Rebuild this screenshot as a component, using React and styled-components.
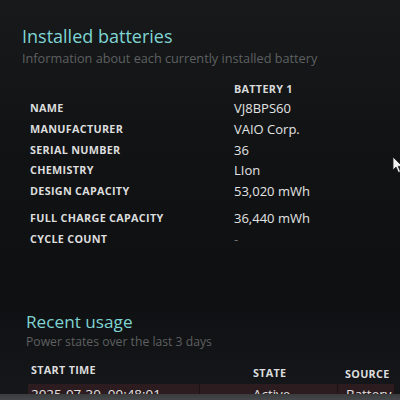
import { styled, createGlobalStyle } from "styled-components";

const GlobalStyle = createGlobalStyle`
    html, body {
        margin: 0;
        padding: 0;
        background: #111214;
    }
    * { box-sizing: border-box; }
`;

const batteryRows = [
    { label: "NAME", value: "VJ8BPS60" },
    { label: "MANUFACTURER", value: "VAIO Corp." },
    { label: "SERIAL NUMBER", value: "36" },
    { label: "CHEMISTRY", value: "LIon" },
    { label: "DESIGN CAPACITY", value: "53,020 mWh" },
    { label: "FULL CHARGE CAPACITY", value: "36,440 mWh", spaced: true },
    { label: "CYCLE COUNT", value: "-", dim: true },
];

function App() {
    return (
        <>
            <GlobalStyle />
            <Screen>
                <Section>
                    <Title>Installed batteries</Title>
                    <Subtitle>Information about each currently installed battery</Subtitle>
                    <InfoTable>
                        <ColHead />
                        <ColHead>BATTERY 1</ColHead>
                        {batteryRows.map(({ label, value, spaced, dim }) => (
                            <Row key={label} $spaced={spaced}>
                                <Label>{label}</Label>
                                <Value $dim={dim}>{value}</Value>
                            </Row>
                        ))}
                    </InfoTable>
                </Section>

                <Section $usage>
                    <Title $small>Recent usage</Title>
                    <Subtitle $small>Power states over the last 3 days</Subtitle>
                    <UsageHead>
                        <Label>START TIME</Label>
                        <Label>STATE</Label>
                        <Label>SOURCE</Label>
                    </UsageHead>
                    <UsageRow>
                        <Cell>2025-07-30  09:48:01</Cell>
                        <Cell>Active</Cell>
                        <Cell>Battery</Cell>
                    </UsageRow>
                </Section>
                <Bezel />
                <Pointer width="12" height="18" viewBox="0 0 12 18">
                    <path d="M1 1 L1 14 L4 11 L6.5 16.5 L8.5 15.6 L6.2 10.4 L10.5 10.4 Z" fill="#f2f2f2" stroke="#222" strokeWidth="0.8" />
                </Pointer>
            </Screen>
        </>
    );
}

const Screen = styled.div`
    width: 400px;
    height: 400px;
    overflow: hidden;
    display: flex;
    flex-direction: column;
    background: linear-gradient(180deg, #17191b 0%, #111214 40%, #0f1012 75%, #15171a 100%);
    font-family: "Open Sans", "Noto Sans", sans-serif;
    position: relative;
`;

const Section = styled.div`
    padding: ${(p) => (p.$usage ? "61px 0 0 26px" : "24px 0 0 22px")};
    display: flex;
    flex-direction: column;
`;

const Title = styled.h1`
    margin: 0;
    font-weight: 400;
    font-size: ${(p) => (p.$small ? "17.2px" : "18px")};
    line-height: ${(p) => (p.$small ? "22px" : "25px")};
    color: #7fd4d2;
`;

const Subtitle = styled.p`
    margin: 0;
    font-size: ${(p) => (p.$small ? "12.2px" : "12.7px")};
    line-height: ${(p) => (p.$small ? "17px" : "18px")};
    color: #5e6061;
`;

const InfoTable = styled.div`
    display: grid;
    grid-template-columns: 204px 1fr;
    margin: 13px 0 0 8px;
`;

const ColHead = styled.div`
    font-size: 10.8px;
    font-weight: 700;
    color: #d8d9da;
    line-height: 18px;
    letter-spacing: 0.3px;
`;

const Row = styled.div`
    display: contents;
    & > * {
        margin-top: ${(p) => (p.$spaced ? "6px" : "0")};
    }
`;

const Label = styled.div`
    font-size: 10.8px;
    font-weight: 700;
    color: #dcdddd;
    letter-spacing: 0.3px;
    line-height: 20.8px;
`;

const Value = styled.div`
    font-size: 13px;
    color: ${(p) => (p.$dim ? "#707070" : "#e2e3e3")};
    line-height: 20.8px;
`;

const UsageHead = styled.div`
    display: grid;
    grid-template-columns: 222px 92px 1fr;
    margin: 10px 0 0 5px;
    & > *:nth-child(2) { margin-top: 3px; }
    & > *:nth-child(3) { margin-top: 4px; }
`;

const UsageRow = styled.div`
    display: grid;
    grid-template-columns: 172px 138px 1fr;
    height: 10px;
    margin: 0 5px 0 2px;
    background: #2c1b1f;
    overflow: hidden;
`;

const Cell = styled.div`
    font-size: 13.4px;
    line-height: 21px;
    white-space: pre;
    color: #e2e3e3;
    padding-left: 3px;
    border-right: 1px solid #1c1214;
    &:nth-child(2) { padding-left: 53px; }
    &:nth-child(3) { padding-left: 8px; }
`;

const Bezel = styled.div`
    height: 8px;
    margin-top: auto;
    flex-shrink: 0;
    background: linear-gradient(180deg, #3a3b3d, #4a4b4e);
`;

const Pointer = styled.svg`
    position: absolute;
    left: 392px;
    top: 156px;
`;

export default App;
